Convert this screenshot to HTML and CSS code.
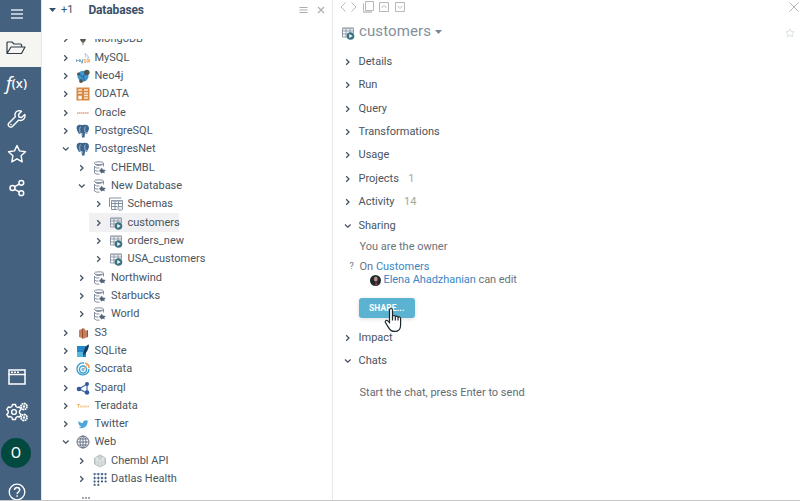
FILE: index.html
```html
<!DOCTYPE html>
<html lang="en">
<head>
<meta charset="utf-8">
<title>Databases</title>
<link rel="stylesheet" href="styles.css">
</head>
<body>
<svg class="defs" width="0" height="0">
<symbol id="right" viewBox="0 0 12 12"><path d="M4.200 3.200 7 6 4.200 8.800" fill="none" stroke="#465261" stroke-width="1.300"/></symbol>
<symbol id="down" viewBox="0 0 12 12"><path d="M3 4.500 5.800 7.200 8.600 4.500" fill="none" stroke="#465261" stroke-width="1.300"/></symbol>
<symbol id="mongo" viewBox="0 0 14 14"><path d="M7 0C3 4 3 9 7 11c4-2 4-7 0-11z" fill="#5b5450"/><path d="M7 9v4" stroke="#857b76"/></symbol>
<symbol id="mysql" viewBox="0 0 14 14"><path d="M.5 11V8.500L2 10l1.500-1.500V11M4.500 8.500v2h2v-2V12H5" fill="none" stroke="#6ba5c2" stroke-width=".9"/><path d="M10 8.500H8V10h2v1.500H8M11 8.500h1.500v2.500H11zM13.500 8v3.500" fill="none" stroke="#f0b071" stroke-width=".9"/><path d="M8.500 3c3-1 2.500 2 4.500 4h-2M9 3l1 3" fill="none" stroke="#8fbdd2" stroke-width=".8"/></symbol>
<symbol id="neo" viewBox="0 0 14 14"><circle cx="7" cy="7.200" r="5.500" fill="#3d94cf"/><path d="m3 5 4 3 4-5M7 8l2 4" stroke="#236898" fill="none"/><circle cx="10.800" cy="3.500" r="2.800" fill="#4c554f"/><circle cx="2.500" cy="5" r="1.500" fill="#4c554f"/><circle cx="5" cy="12" r="1.900" fill="#4c554f"/></symbol>
<symbol id="odata" viewBox="0 0 14 14"><path d="M.5.5h13v13H.5z" fill="#d48a45"/><path d="M2 3h4M8 3h4M2 6h4M8 6h4M8 8.500h4M8 11h4" stroke="#fae6d0" stroke-width="1.300"/><circle cx="4" cy="10.500" r="2" fill="#fff2e3"/></symbol>
<symbol id="oracle" viewBox="0 0 14 14"><path d="M1 7h12" stroke="#e5a287" stroke-width="1.700" stroke-dasharray="1.500 .4"/></symbol>
<symbol id="pg" viewBox="0 0 14 14"><path d="M1 2C3 0 5 1 7 1c3-1 6 0 6 3 0 3-2 4-2 6L9 9l-.5 4.500H6L5.500 9 3 10C1 7 0 4 1 2z" fill="#3b668f"/><path d="M4.500 2.500C3 5 4 7 4 9M9.500 2.500C8 4 9 6 9 8l3 1M6 9v3" fill="none" stroke="#b8cad9" stroke-width=".8"/></symbol>
<symbol id="db" viewBox="0 0 14 14"><g fill="none" stroke="#8590a0"><ellipse cx="6" cy="2.200" rx="4.700" ry="1.400"/><path d="M1.500 2.500q1 2.300 4.500 2t4.500-2v3M1.500 5.500q1 2 5 1.500M1.500 9q1 1.500 4 1M1.500 5v7q1 1.500 5 1.200"/></g><path d="m6 10 3-3.500.5 2 3.500.5-1.500 1v2.500l-1.500-1-2 1-.5-1.500z" fill="#52627a"/></symbol>
<symbol id="schemas" viewBox="0 0 14 14"><path d="M.5 10V1h12M2.500 3.500h11v6M2.500 3.500v9h5.500M2.500 6.500h11M2.500 9.500h6M6 3.500v9M9.500 3.500V9" fill="none" stroke="#78869a" stroke-width=".9"/><path d="M2.500 4h11" stroke="#9ba6b5" stroke-width="1.300"/><path d="M9 9.500h4.500v3c-1 1-3.500 1-4.500 0z" fill="#e6e9ed" stroke="#8e98a7"/></symbol>
<symbol id="table" viewBox="0 0 14 14"><path d="M1.500 2h11v5M1.500 2v9H7M1.500 5h11M1.500 8H8M5 2v9M9 2v5" fill="none" stroke="#8790a1" stroke-width=".9"/><path d="M1.500 2.500h11" stroke="#a5adb9" stroke-width="1.500"/><circle cx="9.500" cy="10" r="3.800" fill="#3a7480"/><path d="m8.300 7.900 3.300 2.100-3.300 2.100z" fill="#fff"/></symbol>
<symbol id="s3" viewBox="0 0 14 14"><path d="m3 4 3-1v9l-3-1zM7 2l2 1v9l-2 1zM9 4l3 1v6l-3 1z" fill="#c77f5d"/><path d="m6 3 1-1v11l-1-1zM11 4l1 .5v6l-1 .5z" fill="#935039"/></symbol>
<symbol id="sqlite" viewBox="0 0 14 14"><path d="M1 2h9v11H1z" fill="#2588c9"/><path d="M1 8h6v5H1z" fill="#59b6e0"/><path d="M13 .5C10 1 7.500 5 7 12l2-2c3-3 4-7 4-9.500z" fill="#173c60"/></symbol>
<symbol id="socrata" viewBox="0 0 14 14"><g fill="none" stroke="#3d9ed3" stroke-width="1.400"><path d="M8 1a6 6 0 1 0 5 6"/><circle cx="7" cy="7.500" r="3.500"/><circle cx="7" cy="7.500" r="1" stroke="#73bada"/></g><path d="m7 8 4-5" stroke="#efaa6e"/><path d="M9 1a5 5 0 0 1 4 5" stroke="#ed9b58" stroke-width="1.600" fill="none"/></symbol>
<symbol id="sparql" viewBox="0 0 14 14"><path d="m3 8 8-5v9zM3 8l8 4" fill="none" stroke="#3f68a6" stroke-width="1.200"/><g fill="#31599b"><circle cx="3" cy="8" r="2.300"/><circle cx="11" cy="3" r="2"/><circle cx="11" cy="11.500" r="2.300"/></g></symbol>
<symbol id="tera" viewBox="0 0 14 14"><path d="M1 5.500h3M2.500 5.500v3" stroke="#f6b868"/><path d="M4 7.500h9" stroke="#f7cb94" stroke-width="2" stroke-dasharray="1.200 .4"/></symbol>
<symbol id="tw" viewBox="0 0 14 14"><path d="M2.500 4c1.500 1.500 3 2 4.500 2 0-3 3-3.500 4-2.200l1.500-.3-1 1.500c0 5-5 7.500-9 5.500 1 0 2-.3 2.500-1C4 9 3.200 8.500 3 7.500c-.5-1-1-2-.5-3.500z" fill="#4ca8d9"/></symbol>
<symbol id="web" viewBox="0 0 14 14"><g fill="none" stroke="#697386" stroke-width="1"><circle cx="7" cy="7" r="6"/><ellipse cx="7" cy="7" rx="3" ry="6"/><path d="M1 7h12M7 1v12M2 4h10M2 10h10"/></g></symbol>
<symbol id="chembl" viewBox="0 0 14 14"><path d="m7 1 5.500 3v6L7 13l-5.500-3V4z" fill="#cbd0d0" stroke="#b8bebe"/><path d="m2 4 5 3 5-3M7 7v6M4 3v8M10 3v8" fill="none" stroke="#e9eded" stroke-width=".9"/></symbol>
<symbol id="datlas" viewBox="0 0 14 14"><path d="M1.500 2h11M1.500 6h11M1.500 2v11M5.500 2v11M9 2v8M12.500 2v8" stroke="#9aabbe" stroke-width=".7" fill="none"/><path d="M.6 2h13M.6 6h13M.6 9.500h13M.6 13h6" stroke="#335172" stroke-width="1.700" stroke-dasharray="2 1.700"/></symbol>
<symbol id="dots" viewBox="0 0 14 14"><path d="M3 8h8M3 11h8" stroke="#858e9a" stroke-width="1.500" stroke-dasharray="2 1"/></symbol>
</svg>
<div class="app">
<nav class="rail">
<div class="cell top"><svg width="14" height="12" viewBox="0 0 14 12"><path d="M1 2h12M1 6h12M1 10h12" stroke="#dce6ea" stroke-width="1.300"/></svg></div>
<div class="cell active"><svg width="20" height="14" viewBox="0 0 20 14"><path d="M1 12.500V2q0-1 1-1h4l2 2h6.500q1 0 1 1v2M1 12.500 5 6h14l-3.500 6.500z" fill="none" stroke="#303c48" stroke-width="1.200" stroke-linejoin="round"/></svg></div>
<div class="cell fx"><i>f</i><span>(x)</span></div>
<div class="cell"><svg width="20" height="20" viewBox="0 0 20 20"><path d="M17.800 5.500 14.500 8.500 12 8l-.5-2.500 3-3.300C12 1 9 2 8.200 4.500c-.4 1.200-.3 2.200.1 3.200L2 14c-1 1-.8 2.500 0 3.400s2.400 1 3.400 0l6.400-6.300c3.800 1.400 7-2 6-5.600z" fill="none" stroke="#fff" stroke-width="1.400" stroke-linejoin="round"/><circle cx="4" cy="15.600" r=".8" fill="#fff"/></svg></div>
<div class="cell"><svg width="20" height="20" viewBox="0 0 20 20"><path d="m10 1.500 2.500 5.400 6 .8-4.400 4.100 1.100 6-5.200-3-5.200 3 1.100-6-4.400-4.100 6-.8z" fill="none" stroke="#fff" stroke-width="1.400" stroke-linejoin="round"/></svg></div>
<div class="cell"><svg width="18" height="18" viewBox="0 0 18 18"><g fill="none" stroke="#fff" stroke-width="1.500"><circle cx="4.500" cy="9" r="2.500"/><circle cx="13.300" cy="3.800" r="2.400"/><circle cx="13.300" cy="14.200" r="2.400"/><path d="m6.700 7.700 4.500-2.600M6.700 10.300l4.500 2.600"/></g></svg></div>
<div class="cell bottom"><svg width="18" height="16" viewBox="0 0 18 16"><path d="M1 5.500V1h16v4.500M.5 5.500h17" fill="none" stroke="#fff" stroke-width="1.500"/><path d="M1 5v10h16V5" fill="none" stroke="#fff" stroke-width="1.500"/><path d="M3 3.200h8" stroke="#fff" stroke-width="1.500" stroke-dasharray="2 1"/></svg></div>
<div class="cell"><svg width="22" height="20" viewBox="0 0 22 20"><g fill="none" stroke="#fff" stroke-width="1.400"><path d="m6.500 2.500 3-.0.5 2 1.500 1 2-.5 1.500 2.500-1.500 1.500v2l1.500 1.500-1.500 2.500-2-.5-1.500 1-.5 2h-3l-.5-2-1.500-1-2 .5L.8 12.500 2.200 11V9L.8 7.500 2.300 5l2 .5 1.500-1z" stroke-linejoin="round"/><circle cx="8" cy="10" r="2.400"/><circle cx="18" cy="4.500" r="3" stroke-dasharray="1.800 .5" stroke-width="1.800"/><circle cx="18" cy="15.500" r="3" stroke-dasharray="1.800 .5" stroke-width="1.800"/><circle cx="18" cy="4.500" r=".6"/><circle cx="18" cy="15.500" r=".6"/></g></svg></div>
<div class="avatar">O</div>
<div class="cell help"><svg width="18" height="18" viewBox="0 0 18 18"><circle cx="9" cy="9" r="7.800" fill="none" stroke="#fff" stroke-width="1.300"/><path d="M6.500 7c0-3.300 5.200-3.200 5.200 0 0 2-2.600 2-2.600 4M9.100 12.300v1.500" fill="none" stroke="#fff" stroke-width="1.500"/></svg></div>
</nav>
<section class="browse">
<header class="head"><svg width="7" height="4" viewBox="0 0 7 4"><path d="M0 0h7L3.500 4z" fill="#35516b"/></svg><span class="plus">+1</span><b>Databases</b><svg class="burger" width="10" height="8" viewBox="0 0 10 8"><path d="M.5 1.500h8M.5 4h8M.5 6.500h8" stroke="#a6aeb1"/></svg><svg width="8" height="8" viewBox="0 0 8 8"><path d="m1 1 6 6M7 1 1 7" stroke="#adb1b1" stroke-width="1.200"/></svg></header>
<div class="tree">
<div class="row"><svg><use href="#right"/></svg><svg class="ic"><use href="#mongo"/></svg><span>MongoDB</span></div>
<div class="row"><svg><use href="#right"/></svg><svg class="ic"><use href="#mysql"/></svg><span>MySQL</span></div>
<div class="row"><svg><use href="#right"/></svg><svg class="ic"><use href="#neo"/></svg><span>Neo4j</span></div>
<div class="row"><svg><use href="#right"/></svg><svg class="ic"><use href="#odata"/></svg><span>ODATA</span></div>
<div class="row"><svg><use href="#right"/></svg><svg class="ic"><use href="#oracle"/></svg><span>Oracle</span></div>
<div class="row"><svg><use href="#right"/></svg><svg class="ic"><use href="#pg"/></svg><span>PostgreSQL</span></div>
<div class="row"><svg><use href="#down"/></svg><svg class="ic"><use href="#pg"/></svg><span>PostgresNet</span></div>
<div class="row l1"><svg><use href="#right"/></svg><svg class="ic"><use href="#db"/></svg><span>CHEMBL</span></div>
<div class="row l1"><svg><use href="#down"/></svg><svg class="ic"><use href="#db"/></svg><span>New Database</span></div>
<div class="row l2"><svg><use href="#right"/></svg><svg class="ic"><use href="#schemas"/></svg><span>Schemas</span></div>
<div class="row l2 selected"><svg><use href="#right"/></svg><svg class="ic"><use href="#table"/></svg><span>customers</span></div>
<div class="row l2"><svg><use href="#right"/></svg><svg class="ic"><use href="#table"/></svg><span>orders_new</span></div>
<div class="row l2"><svg><use href="#right"/></svg><svg class="ic"><use href="#table"/></svg><span>USA_customers</span></div>
<div class="row l1"><svg><use href="#right"/></svg><svg class="ic"><use href="#db"/></svg><span>Northwind</span></div>
<div class="row l1"><svg><use href="#right"/></svg><svg class="ic"><use href="#db"/></svg><span>Starbucks</span></div>
<div class="row l1"><svg><use href="#right"/></svg><svg class="ic"><use href="#db"/></svg><span>World</span></div>
<div class="row"><svg><use href="#right"/></svg><svg class="ic"><use href="#s3"/></svg><span>S3</span></div>
<div class="row"><svg><use href="#right"/></svg><svg class="ic"><use href="#sqlite"/></svg><span>SQLite</span></div>
<div class="row"><svg><use href="#right"/></svg><svg class="ic"><use href="#socrata"/></svg><span>Socrata</span></div>
<div class="row"><svg><use href="#right"/></svg><svg class="ic"><use href="#sparql"/></svg><span>Sparql</span></div>
<div class="row"><svg><use href="#right"/></svg><svg class="ic"><use href="#tera"/></svg><span>Teradata</span></div>
<div class="row"><svg><use href="#right"/></svg><svg class="ic"><use href="#tw"/></svg><span>Twitter</span></div>
<div class="row"><svg><use href="#down"/></svg><svg class="ic"><use href="#web"/></svg><span>Web</span></div>
<div class="row l1"><svg><use href="#right"/></svg><svg class="ic"><use href="#chembl"/></svg><span>Chembl API</span></div>
<div class="row l1"><svg><use href="#right"/></svg><svg class="ic"><use href="#datlas"/></svg><span>Datlas Health</span></div>
<div class="row last"><svg class="ic"><use href="#dots"/></svg></div>
</div>
</section>
<main class="panel">
<div class="tools"><svg width="68" height="14" viewBox="0 0 68 14"><g fill="none" stroke="#b5bab8"><path d="M6.500 2.500 2 7l4.500 4.500M12.500 2.500 17 7l-4.500 4.500"/><path d="M24.500 3.500v9h8M26.500 1.500h8v9h-8z"/><path d="M40.500 2.500h9v9h-9zM42.500 8 45 5.500 47.500 8M56.500 2.500h9v9h-9zM58.500 6l2.500 2.500L63.500 6"/></g><path d="M24 12h9" stroke="#d8cdce" stroke-width="2"/></svg><svg width="10" height="10" viewBox="0 0 10 10"><path d="m.5.5 9 9M9.500.5l-9 9" stroke="#b5b8b5"/></svg></div>
<div class="title"><svg class="ic"><use href="#table"/></svg><h1>customers</h1><svg width="7" height="4" viewBox="0 0 7 4"><path d="M0 0h7L3.500 4z" fill="#7b8794"/></svg><svg class="fav" width="10" height="10" viewBox="0 0 10 10"><path d="m5 .8 1.200 2.700 3 .3-2.200 2 .6 3L5 7.300 2.400 8.800l.6-3-2.200-2 3-.3z" fill="none" stroke="#cfdbdc" stroke-width=".8"/></svg></div>
<div class="sec"><svg><use href="#right"/></svg>Details</div>
<div class="sec"><svg><use href="#right"/></svg>Run</div>
<div class="sec"><svg><use href="#right"/></svg>Query</div>
<div class="sec"><svg><use href="#right"/></svg>Transformations</div>
<div class="sec"><svg><use href="#right"/></svg>Usage</div>
<div class="sec"><svg><use href="#right"/></svg>Projects<span class="count">1</span></div>
<div class="sec"><svg><use href="#right"/></svg>Activity<span class="count">14</span></div>
<div class="sec"><svg><use href="#down"/></svg>Sharing</div>
<div class="share">
<div class="owner">You are the owner</div>
<div class="on"><i>?</i><span>On <a>Customers</a></span></div>
<div class="user"><svg width="11" height="11" viewBox="0 0 11 11"><circle cx="5.500" cy="5.500" r="5.500" fill="#20292d"/><ellipse cx="5.800" cy="4" rx="1.900" ry="2.500" fill="#b98f88"/><path d="M4.500 10.800 6 6.500l2 3.800z" fill="#8c3940"/></svg><span><a>Elena Ahadzhanian</a> can edit</span></div>
<div class="btn">SHARE...<svg class="cursor" width="20" height="26" viewBox="0 0 20 26"><path d="M6.500 15.500V3.200c0-2.300 3-2.300 3 0v6.300c.3-1.500 2.800-1.300 2.800.5.400-1.400 2.700-1 2.700.7.600-1.300 2.600-.8 2.600.9v6.300c0 3.800-2.200 6.500-6 6.500-3 0-4.500-1.200-5.700-3.300l-3.500-5.500c-.8-2 1.500-3 2.700-1.500z" fill="#fff" stroke="#1e272c" stroke-width="1.200"/><path d="M9.500 9v4.500M12.300 10v3.500M15 11v2.500" stroke="#1e272c" stroke-width="1.200"/></svg></div>
</div>
<div class="sec"><svg><use href="#right"/></svg>Impact</div>
<div class="sec"><svg><use href="#down"/></svg>Chats</div>
<div class="chat">Start the chat, press Enter to send</div>
</main>
</div>
</body>
</html>
```
FILE: styles.css
```css
* { box-sizing: border-box; }
body { margin: 0; background: #fff; font: 11px/18px Roboto, sans-serif; color: #4a5460; overflow: hidden; }
svg { display: block; flex: none; }
.defs { position: absolute; }
.app { display: flex; height: 501px; border-bottom: 1px solid #c6c6c6; overflow: hidden; }
.rail { width: 41px; background: #44617f; display: flex; flex-direction: column; overflow: hidden; flex: none; padding-right: 8px; }
.cell { height: 34.700px; flex: none; display: flex; align-items: center; justify-content: center; }
.top { height: 32px; padding-bottom: 4px; }
.active { background: #f5f5f2; height: 35px; margin-right: -8px; padding: 0 9px 3px 0; }
.fx { font: 18px/34px "Noto Sans", sans-serif; color: #fff; padding-bottom: 2px; }
.fx span { font-size: 13px; font-weight: 500; }
.bottom { margin-top: auto; }
.avatar { width: 30px; height: 30px; border-radius: 50%; background: #024a40; color: #fff; font: 15px/30px Roboto, sans-serif; text-align: center; margin: 9px 0 11px 1px; flex: none; }
.help { height: 26px; margin-bottom: -5px; }
.browse { width: 291px; display: flex; flex-direction: column; flex: none; border-left: 1px solid #e4e6e8; }
.head { height: 39px; flex: none; display: flex; align-items: center; padding: 0 7px 19px 7px; color: #35516b; }
.plus { margin-left: 5px; }
.head b { font-size: 12px; font-weight: 700; margin-left: 15px; letter-spacing: -.15px; color: #3b5068; }
.burger { margin-left: auto; margin-right: 8px; }
.tree { flex: 1; overflow: hidden; display: flex; flex-direction: column; }
.row { height: 18.33px; flex: none; display: flex; align-items: center; margin-left: 17.500px; white-space: nowrap; }
.row:first-child { margin-top: -8.900px; }
.row svg, .sec svg { width: 12px; height: 12px; }
.row .ic { width: 14px; height: 14px; margin-left: 4.500px; margin-right: 4.500px; }
.l1 { margin-left: 34px; }
.l2 { margin-left: 50.500px; }
.selected { margin-left: 47px; padding-left: 3.500px; width: 90px; background: #f1f1f3; }
.last { margin-left: 32px; }
.panel { flex: 1; border-left: 1px solid #e9e9e9; min-width: 0; }
.tools { height: 14px; display: flex; justify-content: space-between; align-items: center; padding: 0 1px 0 6px; }
.title { height: 35px; display: flex; align-items: center; padding-left: 8px; color: #84909c; }
.title .ic { width: 14px; height: 14px; margin: 2px 4px 0 0; }
h1 { font-size: 15px; font-weight: 400; line-height: 18px; margin: -1px 4px 0 0; letter-spacing: .1px; }
.fav { margin-left: auto; margin-right: 5px; margin-top: 3px; }
.title + .sec { margin-top: 1px; }
.sec { height: 23.450px; display: flex; align-items: center; padding-left: 9px; gap: 4.500px; }
.count { margin-left: 5px; color: #a5a993; }
.share { padding-left: 26.500px; color: #6b737b; height: 88.500px; }
.owner { height: 20.500px; }
.on { position: relative; height: 15px; }
.on i { position: absolute; left: -10px; top: -1px; font-style: normal; font-size: 9px; }
a { color: #3a87c4; }
.user { display: flex; align-items: center; height: 14px; padding-left: 10px; gap: 3px; letter-spacing: -.06px; }
.btn { position: relative; width: 56px; height: 20px; margin-top: 10.500px; margin-left: -.5px; background: #5cb2d1; color: #fff; border-radius: 3px; font-size: 8.500px; line-height: 20px; font-weight: 700; letter-spacing: .1px; padding-left: 10px; box-shadow: 0 1px 4px #ddd; }
.cursor { position: absolute; left: 24px; top: 9px; }
.chat { padding: 11px 0 0 26.500px; color: #636b73; }
```
